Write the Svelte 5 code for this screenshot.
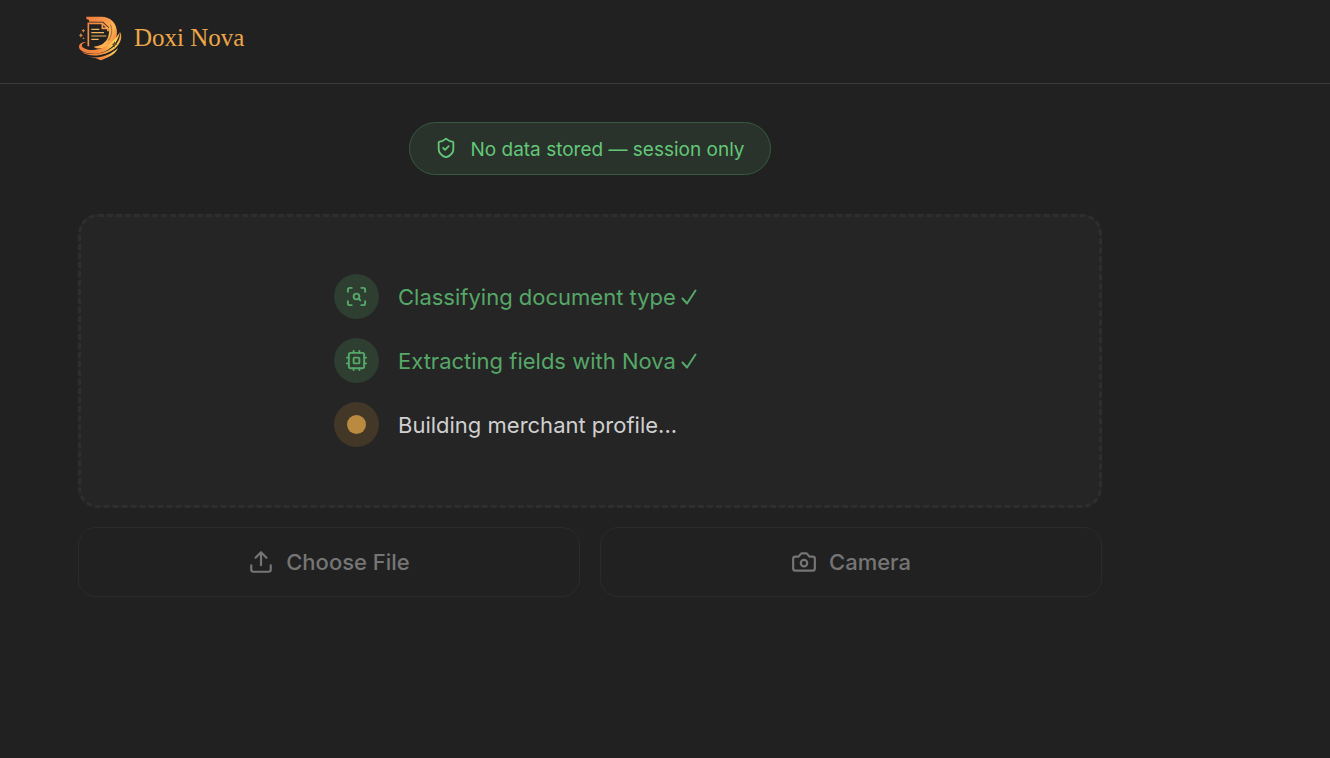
<script>
  const steps = [
    { label: 'Classifying document type', state: 'done', icon: 'scan' },
    { label: 'Extracting fields with Nova', state: 'done', icon: 'cpu' },
    { label: 'Building merchant profile...', state: 'active', icon: 'dot' }
  ];
</script>

<header class="topbar">
  <a class="brand" href="/">
    <svg class="logo" viewBox="0 0 192 180" aria-hidden="true">
      <defs>
        <linearGradient id="flame" x1="50" y1="40" x2="142" y2="90" gradientUnits="userSpaceOnUse">
          <stop offset="0" stop-color="#ee7f3e" />
          <stop offset="0.5" stop-color="#f8994a" />
          <stop offset="0.75" stop-color="#fdb653" />
          <stop offset="1" stop-color="#f2863c" />
        </linearGradient>
        <linearGradient id="swoosh" x1="27" y1="120" x2="156" y2="90" gradientUnits="userSpaceOnUse">
          <stop offset="0" stop-color="#ee7b3c" />
          <stop offset="0.5" stop-color="#f78f3f" />
          <stop offset="0.84" stop-color="#ffda5a" />
          <stop offset="1" stop-color="#f3933f" />
        </linearGradient>
      </defs>
      <path fill="url(#flame)" d="M49 26H94C122 26 141 46 141 73C141 99 121 118 92 121C83 122 75 120 71 116C91 115 108 105 114 88C117 78 119 68 116 58L99 43H57V36L49 33Z" />
      <path fill="none" stroke="#6d4227" stroke-width="2" d="M121 50C129 63 125 87 114 98" />
      <path fill="none" stroke="#222" stroke-width="4" d="M53 43H98L116 60" />
      <path fill="none" stroke="url(#flame)" stroke-width="5" d="M55 115V46H76M76 46H97L114 61V70M97 46V61H112" />
      <path fill="none" stroke="#f2b45e" stroke-width="3.500" d="M64 64H88M64 74H102M64 84H109M64 94H86" />
      <path fill="url(#swoosh)" d="M50 102C35 105 32 114 40 119C66 136 119 123 150 72C143 110 112 134 78 137C49 139 25 129 27 115C28 106 38 101 50 102Z" />
      <path fill="url(#swoosh)" d="M150 72C158 85 153 105 137 119C111 143 59 151 35 131C62 143 103 139 129 118C145 105 151 89 150 72Z" />
      <path fill="url(#swoosh)" d="M53 145C83 154 116 145 144 120C137 138 118 147 93 157C83 153 80 151 74 150Z" />
      <path fill="#df8542" d="M40 62L42 66L46 68L42 70L40 74L38 70L34 68L38 66ZM33 74L35 80L40 82L35 84L33 89L30 84L26 82L30 80ZM41 88L42 90L44 91L42 92L41 94L39 92L37 91L39 90Z" />
      <path fill="#70502b" d="M134 99L136 106L142 109L136 112L134 119L131 112L125 109L131 106Z" />
    </svg>
    <span>Doxi Nova</span>
  </a>
</header>

<main>
  <p class="privacy">
    <svg class="line" width="22" height="22" viewBox="0 0 24 24" aria-hidden="true">
      <path d="M20 13c0 5-3.500 7.500-7.660 8.950a1 1 0 0 1-.67-.01C7.500 20.500 4 18 4 13V6a1 1 0 0 1 1-1c2 0 4.500-1.200 6.240-2.720a1.170 1.170 0 0 1 1.520 0C14.510 3.810 17 5 19 5a1 1 0 0 1 1 1z" />
      <path d="m9 12 2 2 4-4" />
    </svg>
    <span>No data stored — session only</span>
  </p>

  <section class="dropzone" aria-label="Document processing">
    <ol class="steps">
      {#each steps as step}
        <li class={step.state}>
          <span class="badge">
            {#if step.icon === 'scan'}
              <svg class="line" width="23" height="23" viewBox="0 0 24 24" aria-hidden="true">
                <path d="M3 7V5a2 2 0 0 1 2-2h2M17 3h2a2 2 0 0 1 2 2v2M21 17v2a2 2 0 0 1-2 2h-2M7 21H5a2 2 0 0 1-2-2v-2" />
                <circle cx="12" cy="12" r="3" />
                <path d="m16 16-1.900-1.900" />
              </svg>
            {:else if step.icon === 'cpu'}
              <svg class="line" width="23" height="23" viewBox="0 0 24 24" aria-hidden="true">
                <rect x="4" y="4" width="16" height="16" rx="2" />
                <rect x="9" y="9" width="6" height="6" rx="1" />
                <path d="M15 2v2M15 20v2M2 15h2M2 9h2M20 15h2M20 9h2M9 2v2M9 20v2" />
              </svg>
            {:else}
              <span class="dot"></span>
            {/if}
          </span>
          <span class="label">{step.label}</span>
          {#if step.state === 'done'}
            <svg class="tick" width="16" height="18" viewBox="0 0 16 18" role="img" aria-label="done">
              <path d="M1.500 10.500 6 15.500 14.500 2.500" />
            </svg>
          {/if}
        </li>
      {/each}
    </ol>
  </section>

  <div class="actions">
    <button type="button">
      <svg class="line" width="26" height="26" viewBox="0 0 24 24" aria-hidden="true">
        <path d="M12 3v12M17 8l-5-5-5 5M21 15v4a2 2 0 0 1-2 2H5a2 2 0 0 1-2-2v-4" />
      </svg>
      Choose File
    </button>
    <button type="button">
      <svg class="line" width="26" height="26" viewBox="0 0 24 24" aria-hidden="true">
        <path d="M14.500 4h-5L7 7H4a2 2 0 0 0-2 2v9a2 2 0 0 0 2 2h16a2 2 0 0 0 2-2V9a2 2 0 0 0-2-2h-3l-2.500-3z" />
        <circle cx="12" cy="13" r="3" />
      </svg>
      Camera
    </button>
  </div>
</main>

<style>
  :global(body) {
    background: #212121;
    color: #d0d0d0;
    font-family: Inter, 'Liberation Sans', sans-serif;
  }

  .topbar {
    padding: 8px 70px 15px;
    border-bottom: 1px solid #3b3b3b;
  }

  .brand {
    display: inline-flex;
    align-items: center;
    color: #eda648;
    font: 25px/36px 'Liberation Serif', serif;
    text-decoration: none;
    vertical-align: top;
  }

  .logo {
    width: 64px;
    height: 60px;
  }

  main {
    box-sizing: border-box;
    max-width: 1180px;
    padding: 38px 78px;
  }

  .line {
    flex: none;
    fill: none;
    stroke: currentColor;
    stroke-width: 2;
    stroke-linecap: round;
    stroke-linejoin: round;
  }

  .privacy {
    display: flex;
    align-items: flex-start;
    gap: 13px;
    width: fit-content;
    margin: 0 auto 39px;
    padding: 13px 25px 11px;
    border: 1px solid #375b40;
    border-radius: 27px;
    background: #29322b;
    color: #62c878;
    font-size: 19px;
    line-height: 27px;
  }

  .privacy .line {
    margin-top: 1px;
  }

  .dropzone {
    padding: 57px 57px 58px;
    border: 3px dashed #2e2e2e;
    border-radius: 20px;
    background: #252525;
  }

  .steps {
    display: grid;
    gap: 19px;
    max-width: 512px;
    margin: 0 auto;
    padding: 0;
    list-style: none;
    font-size: 22px;
    line-height: 32px;
  }

  .steps li {
    display: flex;
    align-items: center;
  }

  .badge {
    display: grid;
    place-items: center;
    width: 45px;
    height: 45px;
    margin-right: 19px;
    border-radius: 50%;
  }

  .done {
    color: #55a868;
  }

  .done .badge {
    background: #2e3e31;
  }

  .active .badge {
    background: #433827;
  }

  .dot {
    width: 19px;
    height: 19px;
    border-radius: 50%;
    background: #b98a40;
  }

  .tick {
    margin-left: 5px;
    fill: none;
    stroke: currentColor;
    stroke-width: 2;
    stroke-linecap: round;
    stroke-linejoin: round;
  }

  .actions {
    display: grid;
    grid-template-columns: 1fr 1fr;
    gap: 20px;
    margin-top: 19px;
  }

  button {
    display: flex;
    align-items: center;
    justify-content: center;
    gap: 12px;
    padding: 18px;
    border: 1px solid #2b2b2b;
    border-radius: 18px;
    background: #212121;
    color: #757575;
    font: 500 22px/32px Inter, 'Liberation Sans', sans-serif;
  }
</style>
